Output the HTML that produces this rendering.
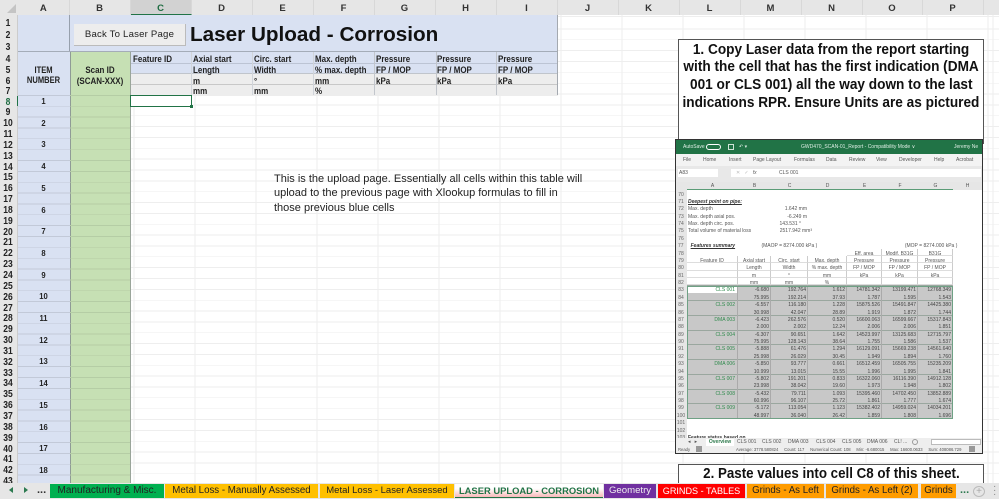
<!DOCTYPE html>
<html><head><meta charset="utf-8"><style>
html,body{margin:0;padding:0;background:#fff}
body{width:999px;height:499px;position:relative;overflow:hidden;font-family:"Liberation Sans",sans-serif;color:#111;filter:blur(.3px)}
.a{position:absolute}
.ch{position:absolute;top:0;height:15px;line-height:18.5px;font-size:9.5px;font-weight:bold;text-align:center;background:#e6e6e6;color:#333;border-right:1px solid #d8d8d8;box-sizing:border-box}
.grid{position:absolute;left:18px;top:15px;width:981px;height:468px;background-image:repeating-linear-gradient(to right,#eee 0,#eee 1px,transparent 1px,transparent 61px),repeating-linear-gradient(to bottom,transparent 0,transparent 10px,#eee 10px,#eee 10.85px);background-position:-6.5px 0,0 3.5px}
.h{position:absolute;font-size:9.5px;font-weight:bold;line-height:11px;white-space:nowrap;color:#222;transform:scaleX(.84);transform-origin:left center}
.hc{transform-origin:center center}
.tab{position:absolute;top:484px;height:14px;line-height:14px;font-size:9.7px;text-align:center;white-space:nowrap;color:#222}
#m{position:absolute;left:675px;top:139px;width:308px;height:315px;background:#fff;border:1px solid #333;border-left-width:1.5px;box-sizing:border-box;overflow:hidden;color:#555;filter:blur(.25px)}
.t5{position:absolute;font-size:5px;line-height:7px;white-space:nowrap}
.r{display:flex;height:7.38px;line-height:10.6px;font-size:5px;white-space:nowrap;color:#555}
.r span{display:block;box-sizing:border-box;overflow:visible;height:7.38px}
.r span:nth-child(1){width:11px;background:#e6e6e6;text-align:center;padding-right:1px;color:#666}
.r span:nth-child(2){width:51px;text-align:right;padding-right:2px}
.r span:nth-child(3){width:33px;text-align:right;padding-right:1px}
.r span:nth-child(4){width:37px;text-align:right;padding-right:1px}
.r span:nth-child(5){width:39px;text-align:right;padding-right:1px}
.r span:nth-child(6){width:35px;text-align:right;padding-right:1px}
.r span:nth-child(7){width:36px;text-align:right;padding-right:1px}
.r span:nth-child(8){width:35px;text-align:right;padding-right:1px}
.c span:nth-child(n+2){text-align:center;padding:0;border-right:1px solid #ccc;border-bottom:1px solid #ddd}
.g span:nth-child(n+2){background:#c8c8c8;border-right:1px solid #aaa;color:#444}
.g span:nth-child(2){color:#2f8a4c}
.g.top span:nth-child(n+2){box-shadow:inset 0 1px 0 #9aa79f}
.sx{display:inline-block;transform:scaleX(.94);transform-origin:center;margin:0 -30px}
</style></head><body>

<div class="grid"></div>

<!-- corner and column headers -->
<div class="a" style="left:0;top:0;width:18px;height:15px;background:#e6e6e6"></div>
<div class="a" style="left:7px;top:4px;width:0;height:0;border-left:9px solid transparent;border-bottom:9px solid #c4c4c4"></div>
<div class="ch" style="left:18px;width:51.5px">A</div>
<div class="ch" style="left:69.5px;width:61px">B</div>
<div class="ch" style="left:130.5px;width:61px;background:#d2d2d2;color:#1d6b40;border-bottom:1px solid #217346">C</div>
<div class="ch" style="left:191.5px;width:61px">D</div>
<div class="ch" style="left:252.5px;width:61px">E</div>
<div class="ch" style="left:313.5px;width:61px">F</div>
<div class="ch" style="left:374.5px;width:61px">G</div>
<div class="ch" style="left:435.5px;width:61px">H</div>
<div class="ch" style="left:496.5px;width:61px">I</div>
<div class="ch" style="left:557.5px;width:61px">J</div>
<div class="ch" style="left:618.5px;width:61px">K</div>
<div class="ch" style="left:679.5px;width:61px">L</div>
<div class="ch" style="left:740.5px;width:61px">M</div>
<div class="ch" style="left:801.5px;width:61px">N</div>
<div class="ch" style="left:862.5px;width:60px">O</div>
<div class="ch" style="left:922.5px;width:61px">P</div>
<div class="ch" style="left:983.5px;width:16px"></div>

<!-- row headers -->
<div class="a" style="left:0;top:15px;width:18px;height:469px;background:#e6e6e6;border-right:1px solid #ccc;box-sizing:border-box"></div>
<div class="a" style="left:0;top:18px;width:16px;text-align:center;font-size:10px;font-weight:bold;line-height:12.2px;color:#222;transform:scaleX(.85)">1<br>2<br>3</div>
<div class="a" style="left:0;top:55px;width:16px;text-align:center;font-size:10px;font-weight:bold;line-height:10.8px;color:#222;transform:scaleX(.85)">4<br>5<br>6<br>7</div>
<div class="a" style="left:0;top:97.5px;width:16px;height:386px;overflow:hidden;text-align:center;font-size:10px;font-weight:bold;line-height:10.85px;color:#222;transform:scaleX(.85)"><span style="color:#1d6b40">8</span><br>9<br>10<br>11<br>12<br>13<br>14<br>15<br>16<br>17<br>18<br>19<br>20<br>21<br>22<br>23<br>24<br>25<br>26<br>27<br>28<br>29<br>30<br>31<br>32<br>33<br>34<br>35<br>36<br>37<br>38<br>39<br>40<br>41<br>42<br>43</div>
<div class="a" style="left:17px;top:96px;width:1.2px;height:10px;background:#217346"></div>

<!-- title block -->
<div class="a" style="left:18px;top:15px;width:539px;height:37px;background:#d9e1f2"></div>
<div class="a" style="left:69px;top:15px;width:1px;height:37px;background:#97a0ad"></div>
<div class="a" style="left:18px;top:51px;width:539px;height:1.5px;background:#a4acb8"></div>
<div class="a" style="left:74px;top:24px;width:112px;height:22px;background:#ededed;border-right:1px solid #bbb;border-bottom:1px solid #bbb;box-sizing:border-box;font-size:9.6px;line-height:22px;text-align:center;color:#222;letter-spacing:.2px">Back To Laser Page</div>
<div class="a" style="left:190px;top:20px;font-size:20.7px;line-height:30px;font-weight:bold;white-space:nowrap;color:#111">Laser Upload - Corrosion</div>

<!-- column A and B -->
<div class="a" style="left:18px;top:52px;width:51.5px;height:431px;background:#d9e1f2"></div>
<div class="a" style="left:18px;top:95px;width:51.5px;height:388px;background-image:repeating-linear-gradient(to bottom,#c2c9d8 0,#c2c9d8 .8px,transparent .8px,transparent 10.85px)"></div>
<div class="a" style="left:69.5px;top:52px;width:61px;height:431px;background:#c6e0b4;border-left:1px solid #8f9b96;border-right:1px solid #9aa59a;box-sizing:border-box"></div>
<div class="a" style="left:70px;top:95px;width:60px;height:388px;background-image:repeating-linear-gradient(to bottom,#b5cda5 0,#b5cda5 .8px,transparent .8px,transparent 10.85px)"></div>
<div class="h hc" style="left:18px;top:64.5px;width:51px;text-align:center;font-size:9px;line-height:10.5px">ITEM<br>NUMBER</div>
<div class="h hc" style="left:70px;top:64.5px;width:60px;text-align:center;line-height:11px">Scan ID<br>(SCAN-XXX)</div>

<div class="a" style="left:18px;top:91px;width:51px;height:392px;overflow:hidden;text-align:center;font-size:8.5px;font-weight:bold;line-height:21.7px;color:#222;transform:scaleX(.9)">1<br>2<br>3<br>4<br>5<br>6<br>7<br>8<br>9<br>10<br>11<br>12<br>13<br>14<br>15<br>16<br>17<br>18</div>

<!-- header table -->
<div class="a" style="left:130.5px;top:52px;width:427px;height:22px;background:#d9e1f2"></div>
<div class="a" style="left:130.5px;top:74px;width:427px;height:21.5px;background:#ededed"></div>
<div class="a" style="left:130.5px;top:73px;width:427px;height:1px;background:#c0c5cc"></div>
<div class="a" style="left:130.5px;top:84px;width:427px;height:1px;background:#c8c8c8"></div>
<div class="a" style="left:130.5px;top:63px;width:427px;height:1px;background:#bcc4d4"></div>
<div class="a" style="left:191px;top:52px;width:1px;height:43px;background:#d0d4da"></div>
<div class="a" style="left:252px;top:52px;width:1px;height:43px;background:#d0d4da"></div>
<div class="a" style="left:313px;top:52px;width:1px;height:43px;background:#d0d4da"></div>
<div class="a" style="left:374px;top:52px;width:1px;height:43px;background:#c2c6cc"></div>
<div class="a" style="left:435.5px;top:52px;width:1px;height:43px;background:#c2c6cc"></div>
<div class="a" style="left:496px;top:52px;width:1px;height:43px;background:#c2c6cc"></div>
<div class="a" style="left:556.5px;top:15px;width:1.2px;height:80px;background:#a4a9b0"></div>

<div class="h" style="left:132.5px;top:53.5px">Feature ID</div>
<div class="h" style="left:193px;top:53.5px">Axial start</div>
<div class="h" style="left:193px;top:64.5px">Length</div>
<div class="h" style="left:193px;top:75.5px">m</div>
<div class="h" style="left:193px;top:86px">mm</div>
<div class="h" style="left:254px;top:53.5px">Circ. start</div>
<div class="h" style="left:254px;top:64.5px">Width</div>
<div class="h" style="left:254px;top:75.5px">°</div>
<div class="h" style="left:254px;top:86px">mm</div>
<div class="h" style="left:315px;top:53.5px">Max. depth</div>
<div class="h" style="left:315px;top:64.5px">% max. depth</div>
<div class="h" style="left:315px;top:75.5px">mm</div>
<div class="h" style="left:315px;top:86px">%</div>
<div class="h" style="left:376px;top:53.5px">Pressure</div>
<div class="h" style="left:376px;top:64.5px">FP / MOP</div>
<div class="h" style="left:376px;top:75.5px">kPa</div>
<div class="h" style="left:437px;top:53.5px">Pressure</div>
<div class="h" style="left:437px;top:64.5px">FP / MOP</div>
<div class="h" style="left:437px;top:75.5px">kPa</div>
<div class="h" style="left:498px;top:53.5px">Pressure</div>
<div class="h" style="left:498px;top:64.5px">FP / MOP</div>
<div class="h" style="left:498px;top:75.5px">kPa</div>

<!-- selected cell -->
<div class="a" style="left:130px;top:95px;width:62px;height:12px;border:1px solid #217346;box-sizing:border-box;background:#fff"></div>
<div class="a" style="left:190px;top:105px;width:3px;height:3px;background:#217346"></div>

<!-- note -->
<div class="a" style="left:274px;top:171.5px;font-size:11px;line-height:14.7px;color:#222;white-space:nowrap">This is the upload page. Essentially all cells within this table will<br>upload to the previous page with Xlookup formulas to fill in<br>those previous blue cells</div>

<!-- text box 1 -->
<div class="a" style="left:678px;top:39px;width:306px;height:105px;background:#fff;border:1px solid #555;box-sizing:border-box;text-align:center;font-size:14.5px;font-weight:bold;line-height:17.8px;padding-top:1.5px;color:#111;white-space:nowrap"><span class="sx">1. Copy Laser data from the report starting</span><br><span class="sx">with the cell that has the first indication (DMA</span><br><span class="sx">001 or CLS 001) all the way down to the last</span><br><span class="sx">indications RPR. Ensure Units are as pictured</span></div>

<!-- embedded screenshot -->
<div id="m">
  <div class="a" style="left:0;top:0;width:306px;height:14px;background:#217346"></div>
  <div class="t5" style="left:7px;top:3.5px;color:#dfeee5">AutoSave</div>
  <div class="a" style="left:30px;top:4px;width:15px;height:6px;border:1px solid #fff;border-radius:4px;box-sizing:border-box"></div>
  <div class="a" style="left:52px;top:4px;width:6px;height:6px;border:1px solid #d0e4d8;box-sizing:border-box"></div>
  <div class="t5" style="left:63px;top:3.5px;color:#dfeee5">↶ ▾</div>
  <div class="t5" style="left:125px;top:3.5px;color:#dfeee5">GWD470_SCAN-01_Report - Compatibility Mode ∨</div>
  <div class="t5" style="left:278px;top:3.5px;color:#dfeee5">Jeremy Ne</div>
  <div class="a" style="left:0;top:14px;width:306px;height:12px;background:#f3f3f3"></div>
  <div class="t5" style="left:7px;top:16.5px">File</div>
  <div class="t5" style="left:27px;top:16.5px">Home</div>
  <div class="t5" style="left:53px;top:16.5px">Insert</div>
  <div class="t5" style="left:77px;top:16.5px">Page Layout</div>
  <div class="t5" style="left:118px;top:16.5px">Formulas</div>
  <div class="t5" style="left:150px;top:16.5px">Data</div>
  <div class="t5" style="left:173px;top:16.5px">Review</div>
  <div class="t5" style="left:200px;top:16.5px">View</div>
  <div class="t5" style="left:223px;top:16.5px">Developer</div>
  <div class="t5" style="left:258px;top:16.5px">Help</div>
  <div class="t5" style="left:280px;top:16.5px">Acrobat</div>
  <div class="a" style="left:0;top:26px;width:306px;height:16px;background:#e8e8e8"></div>
  <div class="a" style="left:2px;top:29px;width:40px;height:8px;background:#fff"></div>
  <div class="a" style="left:55px;top:29px;width:250px;height:8px;background:#fff"></div>
  <div class="t5" style="left:3px;top:29.5px">A83</div>
  <div class="t5" style="left:60px;top:29.5px;color:#bbb">✕ &nbsp; ✓ &nbsp; <i style="color:#666">fx</i></div>
  <div class="t5" style="left:103px;top:29.5px">CLS 001</div>
  <div class="a" style="left:0;top:42px;width:306px;height:8px;background:#e6e6e6"></div>
  <div class="a" style="left:11px;top:49px;width:266px;height:1px;background:#5b9c77"></div>
  <div class="t5" style="left:11px;top:42.5px;width:51px;text-align:center">A</div>
  <div class="t5" style="left:62px;top:42.5px;width:33px;text-align:center">B</div>
  <div class="t5" style="left:95px;top:42.5px;width:37px;text-align:center">C</div>
  <div class="t5" style="left:132px;top:42.5px;width:39px;text-align:center">D</div>
  <div class="t5" style="left:171px;top:42.5px;width:35px;text-align:center">E</div>
  <div class="t5" style="left:206px;top:42.5px;width:36px;text-align:center">F</div>
  <div class="t5" style="left:242px;top:42.5px;width:35px;text-align:center">G</div>
  <div class="t5" style="left:277px;top:42.5px;width:29px;text-align:center">H</div>

  <div class="a" style="left:0;top:49.5px;width:306px">
    <div class="r"><span>70</span></div>
    <div class="r"><span>71</span><span style="width:auto;font-weight:bold;font-style:italic;text-decoration:underline;text-align:left;padding-left:1px;color:#333">Deepest point on pipe:</span></div>
    <div class="r"><span>72</span><span style="width:60px;text-align:left;padding-left:1px">Max. depth</span><span style="width:61px">1.642 mm</span></div>
    <div class="r"><span>73</span><span style="width:60px;text-align:left;padding-left:1px">Max. depth axial pos.</span><span style="width:61px">-6.249 m</span></div>
    <div class="r"><span>74</span><span style="width:60px;text-align:left;padding-left:1px">Max. depth circ. pos.</span><span style="width:55px">143.531 °</span></div>
    <div class="r"><span>75</span><span style="width:75px;text-align:left;padding-left:1px">Total volume of material loss</span><span style="width:51px">2517.942 mm³</span></div>
    <div class="r"><span>76</span></div>
    <div class="r"><span>77</span><span style="font-weight:bold;font-style:italic;text-decoration:underline;text-align:left;padding-left:4px;color:#333">Features summary</span><span style="width:110px;text-align:center">(MAOP = 8274.000 kPa )</span><span style="width:39px"></span><span style="width:106px;text-align:center;padding:0;color:#555">(MOP = 8274.000 kPa )</span></div>
    <div class="r c"><span>78</span><span style="border:0"></span><span style="border:0"></span><span style="border:0"></span><span style="border:0"></span><span>Eff. area</span><span>Modif. B31G</span><span>B31G</span></div>
    <div class="r c"><span>79</span><span>Feature ID</span><span>Axial start</span><span>Circ. start</span><span>Max. depth</span><span>Pressure</span><span>Pressure</span><span>Pressure</span></div>
    <div class="r c"><span>80</span><span></span><span>Length</span><span>Width</span><span>% max. depth</span><span>FP / MOP</span><span>FP / MOP</span><span>FP / MOP</span></div>
    <div class="r c"><span>81</span><span></span><span>m</span><span>°</span><span>mm</span><span>kPa</span><span>kPa</span><span>kPa</span></div>
    <div class="r c"><span>82</span><span></span><span>mm</span><span>mm</span><span>%</span><span></span><span></span><span></span></div>
    <div class="r g top"><span>83</span><span style="background:#fff">CLS 001</span><span>-6.680</span><span>192.764</span><span>1.612</span><span>14781.342</span><span>13199.471</span><span>12768.349</span></div>
    <div class="r g"><span>84</span><span></span><span>75.995</span><span>192.214</span><span>37.93</span><span>1.787</span><span>1.595</span><span>1.543</span></div>
    <div class="r g top"><span>85</span><span>CLS 002</span><span>-6.557</span><span>116.180</span><span>1.228</span><span>15875.526</span><span>15491.847</span><span>14425.380</span></div>
    <div class="r g"><span>86</span><span></span><span>30.998</span><span>42.047</span><span>28.89</span><span>1.919</span><span>1.872</span><span>1.744</span></div>
    <div class="r g top"><span>87</span><span>DMA 003</span><span>-6.423</span><span>262.576</span><span>0.520</span><span>16600.063</span><span>16599.667</span><span>15317.843</span></div>
    <div class="r g"><span>88</span><span></span><span>2.000</span><span>2.002</span><span>12.24</span><span>2.006</span><span>2.006</span><span>1.851</span></div>
    <div class="r g top"><span>89</span><span>CLS 004</span><span>-6.307</span><span>90.651</span><span>1.642</span><span>14523.997</span><span>13125.683</span><span>12715.797</span></div>
    <div class="r g"><span>90</span><span></span><span>75.995</span><span>128.143</span><span>38.64</span><span>1.755</span><span>1.586</span><span>1.537</span></div>
    <div class="r g top"><span>91</span><span>CLS 005</span><span>-5.888</span><span>61.476</span><span>1.294</span><span>16129.091</span><span>15669.238</span><span>14561.640</span></div>
    <div class="r g"><span>92</span><span></span><span>25.998</span><span>26.029</span><span>30.45</span><span>1.949</span><span>1.894</span><span>1.760</span></div>
    <div class="r g top"><span>93</span><span>DMA 006</span><span>-5.850</span><span>93.777</span><span>0.661</span><span>16512.459</span><span>16505.755</span><span>15235.209</span></div>
    <div class="r g"><span>94</span><span></span><span>10.999</span><span>13.015</span><span>15.55</span><span>1.996</span><span>1.995</span><span>1.841</span></div>
    <div class="r g top"><span>95</span><span>CLS 007</span><span>-5.802</span><span>191.201</span><span>0.833</span><span>16322.060</span><span>16116.390</span><span>14912.128</span></div>
    <div class="r g"><span>96</span><span></span><span>23.998</span><span>38.042</span><span>19.60</span><span>1.973</span><span>1.948</span><span>1.802</span></div>
    <div class="r g top"><span>97</span><span>CLS 008</span><span>-5.432</span><span>79.711</span><span>1.093</span><span>15395.460</span><span>14702.450</span><span>13852.889</span></div>
    <div class="r g"><span>98</span><span></span><span>60.996</span><span>96.107</span><span>25.72</span><span>1.861</span><span>1.777</span><span>1.674</span></div>
    <div class="r g top"><span>99</span><span>CLS 009</span><span>-5.172</span><span>113.054</span><span>1.123</span><span>15382.402</span><span>14959.024</span><span>14034.201</span></div>
    <div class="r g"><span>100</span><span></span><span>48.997</span><span>36.040</span><span>26.42</span><span>1.859</span><span>1.808</span><span>1.696</span></div>
    <div class="r"><span>101</span></div>
    <div class="r"><span>102</span></div>
    <div class="r"><span>103</span><span style="width:auto;font-weight:bold;text-align:left;padding-left:1px;color:#333">Feature status based on</span></div>
  </div>
  <!-- selection outline -->
  <div class="a" style="left:10.5px;top:145.5px;width:266.5px;height:133px;border:1px solid #6fa185;box-sizing:border-box"></div>

  <div class="a" style="left:0;top:298px;width:306px;height:15px;background:#eee"></div>
  <div class="t5" style="left:12px;top:298.5px">◂ &nbsp; ▸</div>
  <div class="t5" style="left:30px;top:298.5px;width:28px;background:#fff;color:#2d7a4c;font-weight:bold;text-align:center">Overview</div>
  <div class="t5" style="left:61px;top:298.5px">CLS 001</div>
  <div class="t5" style="left:86px;top:298.5px">CLS 002</div>
  <div class="t5" style="left:112px;top:298.5px">DMA 003</div>
  <div class="t5" style="left:140px;top:298.5px">CLS 004</div>
  <div class="t5" style="left:166px;top:298.5px">CLS 005</div>
  <div class="t5" style="left:191px;top:298.5px">DMA 006</div>
  <div class="t5" style="left:218px;top:298.5px">CL! ...</div>
  <div class="a" style="left:236px;top:299px;width:6px;height:6px;border:1px solid #999;border-radius:50%;box-sizing:border-box"></div>
  <div class="a" style="left:255px;top:299px;width:50px;height:6px;background:#fff;border:1px solid #bbb;box-sizing:border-box"></div>
  <div class="t5" style="left:2px;top:306px;font-size:4.2px">Ready</div>
  <div class="a" style="left:20px;top:306px;width:6px;height:6px;background:#999"></div>
  <div class="t5" style="left:60px;top:306px;font-size:4.2px">Average: 3778.580824 &nbsp; &nbsp; Count: 117 &nbsp; &nbsp; Numerical Count: 108 &nbsp; &nbsp; Min: -6.680015 &nbsp; &nbsp; Max: 16600.0633 &nbsp; &nbsp; Sum: 408086.729</div>
  <div class="a" style="left:293px;top:306px;width:6px;height:6px;background:#999"></div>
</div>

<!-- text box 2 -->
<div class="a" style="left:678px;top:464px;width:306px;height:22px;background:#fff;border:1px solid #555;box-sizing:border-box;text-align:center;font-size:14.5px;font-weight:bold;line-height:19px;color:#111;white-space:nowrap"><span class="sx" style="transform:scaleX(.92)">2. Paste values into cell C8 of this sheet.</span></div>

<!-- sheet tab bar -->
<div class="a" style="left:0;top:483px;width:999px;height:16px;background:#e6e6e6"></div>
<div class="a" style="left:9px;top:487px;width:0;height:0;border-right:4px solid #2c7a50;border-top:3.5px solid transparent;border-bottom:3.5px solid transparent"></div>
<div class="a" style="left:24px;top:487px;width:0;height:0;border-left:4px solid #2c7a50;border-top:3.5px solid transparent;border-bottom:3.5px solid transparent"></div>
<div class="a" style="left:37px;top:484px;font-size:11px;font-weight:bold;color:#333">...</div>
<div class="tab" style="left:50px;width:114px;background:#00b050;font-size:10px">Manufacturing &amp; Misc.</div>
<div class="tab" style="left:165px;width:153px;background:#ffc000">Metal Loss - Manually Assessed</div>
<div class="tab" style="left:320px;width:134px;background:#ffc000;font-size:9.5px">Metal Loss - Laser Assessed</div>
<div class="tab" style="left:455px;width:148px;background:linear-gradient(to bottom,#fff 0,#fff 35%,#f8b8b8 100%);color:#217346;font-weight:bold;font-size:9.4px;border-bottom:1px solid #217346;box-sizing:border-box">LASER UPLOAD - CORROSION</div>
<div class="tab" style="left:604px;width:52px;background:#7030a0;color:#eee;font-size:9.6px">Geometry</div>
<div class="tab" style="left:658px;width:87px;background:#ff0000;color:#fff;font-size:9.1px">GRINDS - TABLES</div>
<div class="tab" style="left:747px;width:77px;background:#ff9c00">Grinds - As Left</div>
<div class="tab" style="left:826px;width:92px;background:#ff9c00">Grinds - As Left (2)</div>
<div class="tab" style="left:921px;width:35px;background:#ff9c00;overflow:hidden">Grinds</div>
<div class="a" style="left:960px;top:484px;font-size:11px;font-weight:bold;color:#2c7a50">...</div>
<div class="a" style="left:973px;top:486px;width:12px;height:11px;border:1px solid #bbb;border-radius:50%;box-sizing:border-box;text-align:center;font-size:10px;line-height:9px;color:#aaa">+</div>
<div class="a" style="left:993px;top:485px;font-size:10px;line-height:4px;color:#888">·<br>·<br>·</div>

</body></html>
